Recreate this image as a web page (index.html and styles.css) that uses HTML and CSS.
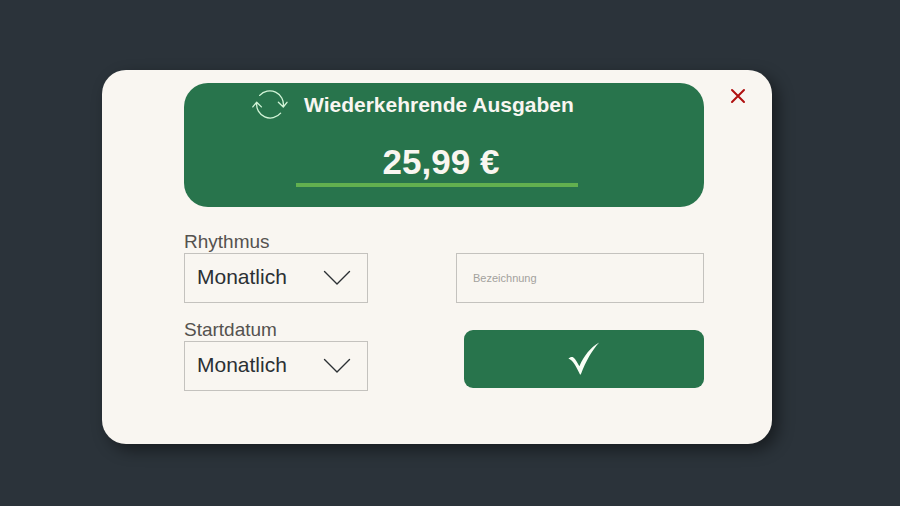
FILE: index.html
```html
<!DOCTYPE html>
<html lang="de">
<head>
<meta charset="utf-8">
<meta name="viewport" content="width=device-width, initial-scale=1">
<title>Wiederkehrende Ausgaben</title>
<link rel="stylesheet" href="styles.css">
</head>
<body>
<form class="dialog">
  <button class="close" type="button" aria-label="Schließen">
    <svg class="close-icon" viewBox="0 0 16 16" aria-hidden="true"><path d="M2 2L14 14M14 2L2 14"/></svg>
  </button>

  <header class="summary">
    <div class="summary-title">
      <svg class="repeat-icon" viewBox="0 0 36 30" aria-hidden="true">
        <path d="M7.7 5.4A13.6 13.6 0 0 1 31.3 16.4M26.4 12.3L31.3 17L35 12.3"/>
        <path d="M28.6 23.2A13.6 13.6 0 0 1 4.7 12.8M0.8 16.9L4.7 12.2L9.4 16.9"/>
      </svg>
      <h1>Wiederkehrende Ausgaben</h1>
    </div>
    <input class="amount" type="text" value="25,99 €" aria-label="Betrag">
  </header>

  <div class="fields">
    <div class="field">
      <label for="rhythm">Rhythmus</label>
      <div class="select">
        <select id="rhythm"><option>Monatlich</option></select>
        <svg class="chevron" viewBox="0 0 28 16" aria-hidden="true"><path d="M1.5 1.5L14 14L26.5 1.5"/></svg>
      </div>
    </div>
    <input class="name" type="text" placeholder="Bezeichnung" aria-label="Bezeichnung">
    <div class="field">
      <label for="start">Startdatum</label>
      <div class="select">
        <select id="start"><option>Monatlich</option></select>
        <svg class="chevron" viewBox="0 0 28 16" aria-hidden="true"><path d="M1.5 1.5L14 14L26.5 1.5"/></svg>
      </div>
    </div>
    <button class="confirm" type="submit" aria-label="Bestätigen">
      <svg class="check-icon" viewBox="0 0 32 34" aria-hidden="true"><path d="M0.4 16.6C2 15 4 14.6 5.4 15.4C7.6 17 9.4 20.6 11.4 24.2C16 14 22.4 5.6 31.2 0.6C24 8.4 18 19 12.8 32.4H12C8.4 25.4 5.4 18.4 0.4 16.6Z"/></svg>
    </button>
  </div>
</form>
</body>
</html>
```

FILE: styles.css
```css
* {
  box-sizing: border-box;
}

body {
  margin: 0;
  min-height: 100vh;
  padding: 70px 128px 60px 102px;
  background: #2b333a;
  color: #2b3034;
  font-family: "Liberation Sans", Arial, sans-serif;
}

button,
input,
select {
  margin: 0;
  font-family: inherit;
}

svg {
  display: block;
  flex-shrink: 0;
  fill: none;
  stroke-linecap: round;
  stroke-linejoin: round;
}

.dialog {
  position: relative;
  padding: 13px 68px 53px 82px;
  border-radius: 24px;
  background: #f9f6f1;
  box-shadow: 6px 6px 16px rgba(0, 0, 0, 0.45);
}

.close {
  position: absolute;
  top: 14px;
  right: 22px;
  padding: 4px;
  border: 0;
  background: none;
}

.close-icon {
  width: 16px;
  height: 16px;
  stroke: #b01010;
  stroke-width: 2;
}

.summary {
  display: flex;
  flex-direction: column;
  gap: 20px;
  padding: 7px 126px 20px 68px;
  border-radius: 24px;
  background: #28744c;
  color: #f9f6f1;
}

.summary-title {
  display: flex;
  align-items: center;
  gap: 16px;
}

.repeat-icon {
  width: 36px;
  height: 30px;
  stroke: #d3f5d8;
  stroke-width: 1.3;
}

h1 {
  margin: 0;
  font-size: 21px;
  line-height: 24px;
  white-space: nowrap;
}

.amount {
  height: 47px;
  margin-left: 44px;
  padding: 0 0 0 8px;
  border: 0;
  border-bottom: 4px solid #62b04f;
  background: none;
  color: inherit;
  font-size: 35px;
  font-weight: bold;
  text-align: center;
}

.fields {
  display: grid;
  grid-template-columns: 184fr 248fr;
  column-gap: 88px;
  row-gap: 16px;
  align-items: end;
  margin-top: 24px;
}

.field label {
  display: block;
  color: #55524f;
  font-size: 19px;
  line-height: 22px;
}

.select {
  position: relative;
}

select {
  display: block;
  appearance: none;
  width: 100%;
  height: 50px;
  padding: 0 12px 3px;
  border: 1px solid #c4c2be;
  border-radius: 0;
  background: none;
  color: inherit;
  font-size: 21px;
}

.chevron {
  position: absolute;
  top: 17px;
  right: 17px;
  width: 28px;
  height: 16px;
  stroke: #2b3034;
  stroke-width: 1.4;
  pointer-events: none;
}

.name {
  width: 100%;
  height: 50px;
  padding: 0 16px;
  border: 1px solid #c4c2be;
  background: none;
  color: inherit;
  font-size: 11px;
}

.name::placeholder {
  color: #a3a19d;
}

.confirm {
  display: flex;
  align-items: center;
  justify-content: center;
  height: 58px;
  margin: 0 0 3px 8px;
  padding: 0;
  border: 0;
  border-radius: 9px;
  background: #28744c;
}

.check-icon {
  width: 32px;
  height: 34px;
  fill: #f9fff6;
}
```
